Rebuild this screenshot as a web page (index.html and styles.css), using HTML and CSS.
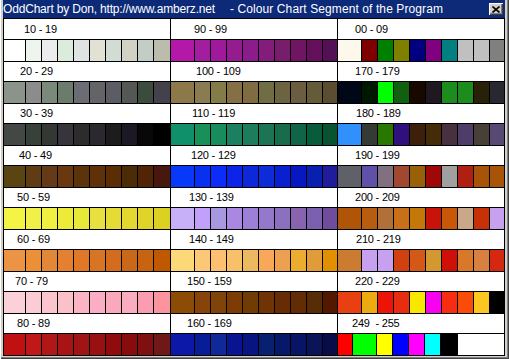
FILE: index.html
```html
<!DOCTYPE html>
<html>
<head>
<meta charset="utf-8">
<title>OddChart</title>
<link rel="stylesheet" href="styles.css">
</head>
<body>
<div class="window">
  <div class="titlebar">
    <div class="title"><span class="t1">OddChart by Don, http://www.amberz.net</span><span class="t2">- Colour Chart Segment of the Program</span></div>
    <div class="close"><svg width="8" height="7" viewBox="0 0 8 7"><path d="M0.5 0.5 L7.5 6.5 M7.5 0.5 L0.5 6.5" stroke="#000" stroke-width="1.6" fill="none"/></svg></div>
  </div>
  <div class="chart">
    <div class="col c1">
      <div class="label first p20">10 - 19</div>
      <div class="sw"><span style="background:#ffffff"></span><span style="background:#eef4ee"></span><span style="background:#ececec"></span><span style="background:#dcecdc"></span><span style="background:#dfe4e2"></span><span style="background:#e2e2d4"></span><span style="background:#d2dcd4"></span><span style="background:#d2d2c4"></span><span style="background:#c4ccc6"></span><span style="background:#bcbcac"></span></div>
      <div class="label p16">20 - 29</div>
      <div class="sw"><span style="background:#8a9488"></span><span style="background:#8c8c8c"></span><span style="background:#7a8a7a"></span><span style="background:#6c7c6c"></span><span style="background:#6c6c74"></span><span style="background:#646468"></span><span style="background:#5c5c64"></span><span style="background:#545854"></span><span style="background:#3c4c3c"></span><span style="background:#44404c"></span></div>
      <div class="label p16">30 - 39</div>
      <div class="sw"><span style="background:#444844"></span><span style="background:#38403a"></span><span style="background:#343834"></span><span style="background:#38343c"></span><span style="background:#2c2c2c"></span><span style="background:#2c2830"></span><span style="background:#1c1c1c"></span><span style="background:#1c1824"></span><span style="background:#080808"></span><span style="background:#000000"></span></div>
      <div class="label p15">40 - 49</div>
      <div class="sw"><span style="background:#5a4412"></span><span style="background:#603c14"></span><span style="background:#643a18"></span><span style="background:#6a3810"></span><span style="background:#5c340c"></span><span style="background:#603008"></span><span style="background:#5c2c04"></span><span style="background:#4c2c04"></span><span style="background:#502404"></span><span style="background:#481810"></span></div>
      <div class="label p13">50 - 59</div>
      <div class="sw"><span style="background:#f4f444"></span><span style="background:#f0f048"></span><span style="background:#f0f040"></span><span style="background:#ecec38"></span><span style="background:#e8e838"></span><span style="background:#e8e040"></span><span style="background:#e4dc34"></span><span style="background:#e4d830"></span><span style="background:#e0d428"></span><span style="background:#dcd020"></span></div>
      <div class="label p13">60 - 69</div>
      <div class="sw"><span style="background:#ec9444"></span><span style="background:#ec9038"></span><span style="background:#e08838"></span><span style="background:#e48030"></span><span style="background:#e07828"></span><span style="background:#d87424"></span><span style="background:#d46c20"></span><span style="background:#c86818"></span><span style="background:#c86410"></span><span style="background:#c05800"></span></div>
      <div class="label p11">70 - 79</div>
      <div class="sw"><span style="background:#fcd0d8"></span><span style="background:#fcccd4"></span><span style="background:#fcc4cc"></span><span style="background:#fcc0c8"></span><span style="background:#fcb4c4"></span><span style="background:#fcacc4"></span><span style="background:#fca8bc"></span><span style="background:#fcacc0"></span><span style="background:#fc9cb0"></span><span style="background:#fc94a0"></span></div>
      <div class="label p13">80 - 89</div>
      <div class="sw"><span style="background:#c01010"></span><span style="background:#c01818"></span><span style="background:#b01818"></span><span style="background:#a81414"></span><span style="background:#a01414"></span><span style="background:#981010"></span><span style="background:#900c0c"></span><span style="background:#880c0c"></span><span style="background:#801010"></span><span style="background:#701818"></span></div>
    </div>
    <div class="col c2">
      <div class="label first p23">90 - 99</div>
      <div class="sw"><span style="background:#b418a8"></span><span style="background:#a41ca0"></span><span style="background:#a0189c"></span><span style="background:#941c90"></span><span style="background:#8c1c8c"></span><span style="background:#841c7c"></span><span style="background:#781c6c"></span><span style="background:#701464"></span><span style="background:#64105c"></span><span style="background:#541054"></span></div>
      <div class="label p25">100 - 109</div>
      <div class="sw"><span style="background:#8c7848"></span><span style="background:#887c50"></span><span style="background:#847c48"></span><span style="background:#847044"></span><span style="background:#806c40"></span><span style="background:#706c44"></span><span style="background:#6c6440"></span><span style="background:#6c5c40"></span><span style="background:#645c38"></span><span style="background:#5c4c30"></span></div>
      <div class="label p21">110 - 119</div>
      <div class="sw"><span style="background:#10906a"></span><span style="background:#189058"></span><span style="background:#188c5c"></span><span style="background:#1c8060"></span><span style="background:#1c7c5c"></span><span style="background:#1c7454"></span><span style="background:#186c4c"></span><span style="background:#106448"></span><span style="background:#085c3c"></span><span style="background:#085430"></span></div>
      <div class="label p20">120 - 129</div>
      <div class="sw"><span style="background:#0838f8"></span><span style="background:#0830f0"></span><span style="background:#0c2cf8"></span><span style="background:#0c24e8"></span><span style="background:#0c28d8"></span><span style="background:#0c2cd8"></span><span style="background:#0820d0"></span><span style="background:#0818c0"></span><span style="background:#0820b0"></span><span style="background:#201c9c"></span></div>
      <div class="label p18">130 - 139</div>
      <div class="sw"><span style="background:#c8b0f8"></span><span style="background:#c0a0f8"></span><span style="background:#a898e0"></span><span style="background:#a888e0"></span><span style="background:#9c80d8"></span><span style="background:#9478cc"></span><span style="background:#8c70c0"></span><span style="background:#8864b0"></span><span style="background:#7c60b0"></span><span style="background:#704c9c"></span></div>
      <div class="label p18">140 - 149</div>
      <div class="sw"><span style="background:#fcd878"></span><span style="background:#fcc878"></span><span style="background:#fcc070"></span><span style="background:#f8c068"></span><span style="background:#ecb860"></span><span style="background:#f8a858"></span><span style="background:#eca050"></span><span style="background:#ecac30"></span><span style="background:#e09c38"></span><span style="background:#e09000"></span></div>
      <div class="label p16">150 - 159</div>
      <div class="sw"><span style="background:#8c4c04"></span><span style="background:#884408"></span><span style="background:#804408"></span><span style="background:#7c3c04"></span><span style="background:#703c04"></span><span style="background:#703404"></span><span style="background:#682c04"></span><span style="background:#642c04"></span><span style="background:#582c04"></span><span style="background:#541800"></span></div>
      <div class="label p16">160 - 169</div>
      <div class="sw"><span style="background:#0c18a8"></span><span style="background:#081c98"></span><span style="background:#102898"></span><span style="background:#081490"></span><span style="background:#081480"></span><span style="background:#082070"></span><span style="background:#081868"></span><span style="background:#081464"></span><span style="background:#0c1458"></span><span style="background:#080c48"></span></div>
    </div>
    <div class="col c3">
      <div class="label first p17">00 - 09</div>
      <div class="sw"><span style="background:#fcf8ec"></span><span style="background:#800000"></span><span style="background:#008000"></span><span style="background:#808000"></span><span style="background:#000080"></span><span style="background:#800080"></span><span style="background:#008080"></span><span style="background:#c0c0c0"></span><span style="background:#c0c0c0"></span><span style="background:#808080"></span></div>
      <div class="label p17">170 - 179</div>
      <div class="sw"><span style="background:#000818"></span><span style="background:#001800"></span><span style="background:#00ff00"></span><span style="background:#106010"></span><span style="background:#180800"></span><span style="background:#201820"></span><span style="background:#1c8c1c"></span><span style="background:#1c8c1c"></span><span style="background:#282008"></span><span style="background:#282830"></span></div>
      <div class="label p18">180 - 189</div>
      <div class="sw"><span style="background:#3090fc"></span><span style="background:#343a34"></span><span style="background:#287800"></span><span style="background:#30107c"></span><span style="background:#3c200c"></span><span style="background:#442c08"></span><span style="background:#483040"></span><span style="background:#503c68"></span><span style="background:#484038"></span><span style="background:#584874"></span></div>
      <div class="label p17">190 - 199</div>
      <div class="sw"><span style="background:#606068"></span><span style="background:#6050a8"></span><span style="background:#807080"></span><span style="background:#a04830"></span><span style="background:#986008"></span><span style="background:#a00808"></span><span style="background:#a0a0a0"></span><span style="background:#b02010"></span><span style="background:#a85408"></span><span style="background:#a85408"></span></div>
      <div class="label p17">200 - 209</div>
      <div class="sw"><span style="background:#b05408"></span><span style="background:#b85c10"></span><span style="background:#b07038"></span><span style="background:#c87018"></span><span style="background:#c47808"></span><span style="background:#c81408"></span><span style="background:#c85808"></span><span style="background:#c8a888"></span><span style="background:#c83008"></span><span style="background:#c8a0f0"></span></div>
      <div class="label p18">210 - 219</div>
      <div class="sw"><span style="background:#cc7c30"></span><span style="background:#c8a0f0"></span><span style="background:#c8a0f0"></span><span style="background:#d04010"></span><span style="background:#d45818"></span><span style="background:#d49830"></span><span style="background:#d01008"></span><span style="background:#d87828"></span><span style="background:#d88040"></span><span style="background:#d42810"></span></div>
      <div class="label p17">220 - 229</div>
      <div class="sw"><span style="background:#e84010"></span><span style="background:#ecac10"></span><span style="background:#ec1408"></span><span style="background:#e82c10"></span><span style="background:#f8e800"></span><span style="background:#f800f0"></span><span style="background:#f82c10"></span><span style="background:#f84c08"></span><span style="background:#fcc820"></span><span style="background:#000000"></span></div>
      <div class="label p14">249&nbsp; - 255</div>
      <div class="sw last"><span style="background:#ff0000"></span><span style="background:#00ff00"></span><span style="background:#ffff00"></span><span style="background:#0000ff"></span><span style="background:#ff00ff"></span><span style="background:#00ffff"></span><span style="background:#000000"></span><span style="background:#ffffff"></span></div>
    </div>
  </div>
</div>
</body>
</html>
```
FILE: styles.css
```css
html, body {
  margin: 0;
  padding: 0;
  background: #d4d0c8;
}

.window {
  width: 509px;
  height: 359px;
  box-sizing: border-box;
  padding: 0 4px 3px 3px;
  background: #d4d0c8;
  box-shadow: inset 1px 0 #ffffff, inset -1px -1px #404040, inset -2px -2px #808080;
  font-family: "Liberation Sans", Arial, sans-serif;
}

.titlebar {
  height: 18px;
  background: #0c2a78;
  display: flex;
  justify-content: space-between;
  align-items: flex-start;
  color: #ffffff;
  font-size: 12px;
  line-height: 18px;
}

.title {
  display: flex;
  white-space: pre;
}

.t1 {
  letter-spacing: -0.18px;
}

.t2 {
  margin-left: 15px;
  letter-spacing: 0.1px;
}

.close {
  width: 14px;
  height: 12px;
  box-sizing: border-box;
  margin: 3px 2px 0 0;
  background: #d4d0c8;
  box-shadow: inset 1px 1px #ffffff, inset -1px -1px #404040, inset -2px -2px #808080;
  display: flex;
  align-items: center;
  justify-content: center;
  padding-right: 1px;
}

.close svg {
  display: block;
}

.chart {
  display: grid;
  grid-template-columns: repeat(3, 166px);
  gap: 1px;
  background: #000000;
  border: 1px solid #000000;
}

.col {
  display: flex;
  flex-direction: column;
  gap: 1px;
  background: #000000;
}

.label {
  height: 19px;
  background: #ffffff;
  color: #000000;
  font-size: 11px;
  line-height: 19px;
  letter-spacing: -0.2px;
  white-space: pre;
}

.label.first {
  height: 20px;
  line-height: 20px;
}

.p11 { padding-left: 11px; }
.p13 { padding-left: 13px; }
.p14 { padding-left: 14px; }
.p15 { padding-left: 15px; }
.p16 { padding-left: 16px; }
.p17 { padding-left: 17px; }
.p18 { padding-left: 18px; }
.p20 { padding-left: 20px; }
.p21 { padding-left: 21px; }
.p23 { padding-left: 23px; }
.p25 { padding-left: 25px; }

.sw {
  height: 21px;
  display: grid;
  gap: 1px;
  background: #000000;
}

.c1 .sw {
  grid-template-columns: 21px repeat(8, 15px) 16px;
}

.c2 .sw,
.c3 .sw {
  grid-template-columns: 23px repeat(8, 15px) 14px;
}

.c3 .sw.last {
  grid-template-columns: 14px 23px 15px 15px 15px 15px 16px 46px;
}

.sw span {
  display: block;
}
```
